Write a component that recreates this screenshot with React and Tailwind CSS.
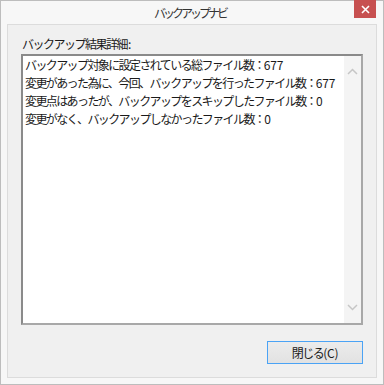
export default function App() {
  const lines = [
    ["バックアップ対象に設定されている総ファイル数：", "677"],
    ["変更があった為に、今回、バックアップを行ったファイル数：", "677"],
    ["変更点はあったが、バックアップをスキップしたファイル数：", "0"],
    ["変更がなく、バックアップしなかったファイル数：", "0"],
  ];
  return (
    <div className="w-[384px] h-[385px] bg-[#f7f7f7] border border-[#bdbdbd] flex flex-col font-['Noto_Sans_CJK_JP',sans-serif]">
      <div className="relative h-[23px] flex items-center justify-center">
        <span className="text-[12px] leading-none text-[#333] tracking-[-3px] -ml-[4px]">バックアップナビ</span>
        <div className="absolute top-[-1px] right-[7px] w-[22px] h-[18px] bg-[#c75050] flex items-center justify-center">
          <svg width="9" height="9" viewBox="0 0 9 9">
            <path d="M1 1 L8 8 M8 1 L1 8" stroke="#fff" strokeWidth="1.6" />
          </svg>
        </div>
      </div>
      <div className="flex-1 mx-[6px] mb-[6px] bg-[#f0f0f0] border border-[#dcdcdc] flex flex-col px-[13px] pt-[11px] pb-[13px]">
        <div className="text-[12px] leading-[16px] text-[#1a1a1a] tracking-[-1.5px] pl-[1px] whitespace-nowrap">
          バックアップ結果詳細<span className="tracking-normal pl-[1px]">:</span>
        </div>
        <div className="mt-[2px] h-[271px] bg-white border-2 border-t-[#8a8a8a] border-l-[#8a8a8a] border-r-[#a8a8a8] border-b-[#a8a8a8] flex">
          <div className="flex-1 pl-[2px] pt-0 text-[12px] leading-[18px] text-[#1a1a1a] tracking-[-1.6px] whitespace-nowrap">
            {lines.map(([t, n], i) => (
              <div key={i}>
                {t}
                <span className="tracking-[-0.2px]">{n}</span>
              </div>
            ))}
          </div>
          <div className="w-[17px] bg-[#f4f4f4] flex flex-col items-center justify-between py-[12px]">
            <svg width="11" height="7" viewBox="0 0 11 7">
              <path d="M1 6 L5.5 1.5 L10 6" fill="none" stroke="#c6c6c6" strokeWidth="1.5" />
            </svg>
            <svg width="11" height="7" viewBox="0 0 11 7">
              <path d="M1 1 L5.5 5.5 L10 1" fill="none" stroke="#c6c6c6" strokeWidth="1.5" />
            </svg>
          </div>
        </div>
        <div className="flex-1" />
        <div className="flex justify-end">
          <button className="w-[96px] h-[23px] border border-[#4ba3f5] bg-gradient-to-b from-[#ececec] to-[#e2e2e2] text-[12px] leading-none text-[#1a1a1a]">
            <span className="tracking-[-1.5px]">閉じる</span>
            <span className="tracking-[-0.3px]">(C)</span>
          </button>
        </div>
      </div>
    </div>
  );
}
